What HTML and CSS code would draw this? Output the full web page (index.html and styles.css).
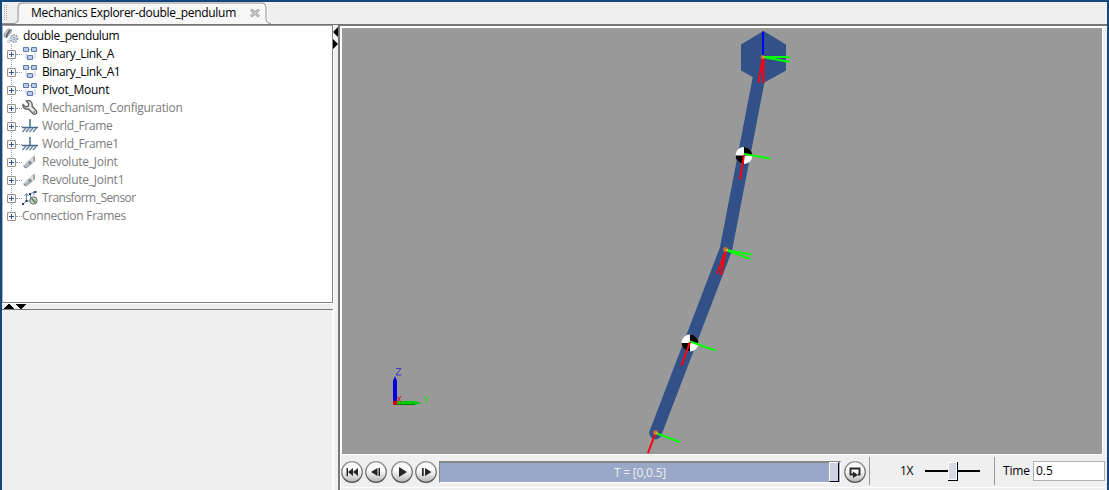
FILE: index.html
```html
<!DOCTYPE html>
<html lang="en">
<head>
<meta charset="utf-8">
<title>Mechanics Explorer</title>
<link rel="stylesheet" href="styles.css">
</head>
<body>
<svg class="defs" width="0" height="0">
  <defs>
    <linearGradient id="ball" x1="0" y1="0" x2="0" y2="1">
      <stop offset="0" stop-color="#f4f4f4"/><stop offset=".4" stop-color="#fff"/><stop offset="1" stop-color="#b5b5b5"/>
    </linearGradient>
    <linearGradient id="rim" x1="0" y1="0" x2="0" y2="1">
      <stop offset="0" stop-color="#999"/><stop offset="1" stop-color="#505050"/>
    </linearGradient>
    <linearGradient id="metal" x1="0" y1="0" x2="1" y2="1">
      <stop offset="0" stop-color="#f4f4f4"/><stop offset=".5" stop-color="#b8bfc5"/><stop offset="1" stop-color="#68727b"/>
    </linearGradient>
    <symbol id="blocks" viewBox="0 0 16 16">
      <path d="M4 7v5h3M13 7v5h-3M6 3.500h4" fill="none" stroke="#b9c5d8"/>
      <path d="M1.500 1.500h5v4h-5zM9.500 1.500h5v4h-5zM5.500 9.500h5v4h-5z" fill="#b9cdf0" stroke="#60779f"/>
    </symbol>
    <symbol id="wrench" viewBox="0 0 16 16">
      <path d="M1 4.500 3.800 7l2.400-.8.500-2.500L4.200 1C7.800-.3 11 2.300 10 6l4.300 4.800c1.400 2.600-1.300 4.500-3.300 2.900L6.500 9C3.300 10 .3 7.600 1 4.500z" fill="#e6e6e6" stroke="#5c5c5c" stroke-width="1.300"/>
      <circle cx="12.200" cy="12" r=".9" fill="#777"/>
    </symbol>
    <symbol id="ground" viewBox="0 0 16 16">
      <path d="M8 1v8M0 9.500h16" fill="none" stroke="#47698b" stroke-width="1.500"/>
      <path d="M4 10 .5 14M7.500 10 4 14M11 10l-3.500 4M14.500 10 11 14" fill="none" stroke="#5f7d9b" stroke-width="1.300"/>
    </symbol>
    <symbol id="joint" viewBox="0 0 16 16">
      <path d="M12.500 1.500 8.500 5 7 9l3 1 2.500-2.500z" fill="#dde1e4" stroke="#b3babf" stroke-width=".7"/>
      <path d="M6.500 6.500 9.500 8 9 10.500l-5 3.700-2.500-2z" fill="url(#metal)" stroke="#a0a8af" stroke-width=".6"/>
      <circle cx="8" cy="8.400" r="1.500" fill="#7c868d"/>
      <path d="m1.700 12 2.300 2M12 3v4.500" stroke="#66717a"/>
    </symbol>
    <symbol id="sensor" viewBox="0 0 16 16">
      <path d="M4.500 4v7M4.500 11h5M4.500 11 1 14M2.500 6l2-2.500 2 2.500M7 4l6-2M8.500 3v6M12 1v4" fill="none" stroke="#6187ae"/>
      <path d="M0 13h2v2H0zM7 3h2v2H7zM12.500 1h2v2h-2zM3.500 10h2v2h-2z" fill="#283d54"/>
      <circle cx="11.500" cy="10.500" r="3.700" fill="#c7d0c7" stroke="#68746c"/>
      <path d="m9.500 8.500 4 4" stroke="#387449" stroke-width="1.200"/>
    </symbol>
    <symbol id="model" viewBox="0 0 16 16">
      <path d="M5 1 8.500 1.500 8 4.500l-4.500 5L1 8.500V6z" fill="url(#metal)" stroke="#79828b" stroke-width=".7"/>
      <path d="M7 2 3.700 7v2.500" fill="none" stroke="#3f4a55" stroke-width="1.300"/>
      <circle cx="11" cy="10.500" r="3.400" fill="#e6ecf0" stroke="#8197aa" stroke-width="1.800" stroke-dasharray="1.500 1"/>
      <circle cx="11" cy="10.500" r="1.200" fill="#fff" stroke="#8295a5"/>
      <circle cx="6" cy="13.500" r="1.500" fill="#e6ecf0" stroke="#91a4b4" stroke-dasharray="1 .7"/>
    </symbol>
  </defs>
</svg>
<div class="window">
  <header class="tabs">
    <svg width="280" height="22">
      <path d="M0 21.500h14q4 0 4-4V5q0-4 4-4h240q4 0 4 4v12.500q0 4 4 4h10V22H0z" fill="#f7f7f7"/>
      <path d="M0 21.500h11q5 0 5-5V5q0-4 4-4h240q4 0 4 4v11.500q0 5 5 5" fill="none" stroke="#929292"/>
      <path d="M0 3h11v18H0z" fill="#efefef"/>
      <path d="M2.500 3v16M4.500 3v16" stroke="#aaa" stroke-dasharray="1 1"/>
      <path d="m249 7.500 8 7M257 7.500l-8 7" stroke="#a4a4a4" stroke-width="2.800"/>
      <path d="m249.500 8 7 6M256.500 8l-7 6" stroke="#e8e8e8" stroke-width=".8"/>
    </svg>
    <span class="title">Mechanics Explorer-double_pendulum</span>
  </header>
  <div class="main">
    <aside class="side">
      <ul class="tree">
        <li class="root tight"><svg width="17" height="16"><use href="#model" width="16" height="16"/></svg><span>double_pendulum</span></li>
        <li class="tight"><i class="plus"></i><svg width="16" height="16"><use href="#blocks"/></svg><span>Binary_Link_A</span></li>
        <li class="tight"><i class="plus"></i><svg width="16" height="16"><use href="#blocks"/></svg><span>Binary_Link_A1</span></li>
        <li><i class="plus"></i><svg width="16" height="16"><use href="#blocks"/></svg><span>Pivot_Mount</span></li>
        <li class="dim"><i class="plus"></i><svg width="16" height="16"><use href="#wrench"/></svg><span>Mechanism_Configuration</span></li>
        <li class="dim tight"><i class="plus"></i><svg width="16" height="16"><use href="#ground"/></svg><span>World_Frame</span></li>
        <li class="dim tight"><i class="plus"></i><svg width="16" height="16"><use href="#ground"/></svg><span>World_Frame1</span></li>
        <li class="dim"><i class="plus"></i><svg width="16" height="16"><use href="#joint"/></svg><span>Revolute_Joint</span></li>
        <li class="dim"><i class="plus"></i><svg width="16" height="16"><use href="#joint"/></svg><span>Revolute_Joint1</span></li>
        <li class="dim tightest"><i class="plus"></i><svg width="16" height="16"><use href="#sensor"/></svg><span>Transform_Sensor</span></li>
        <li class="dim last"><i class="plus"></i><span>Connection Frames</span></li>
      </ul>
      <div class="hsplit"><svg width="26" height="5" shape-rendering="crispEdges"><path d="M3 5 7.500 0h1L13 5zM14 0h11l-5 5h-1z"/></svg></div>
      <div class="blank"></div>
    </aside>
    <div class="vsplit"><svg width="5" height="24"><path d="M5 0v10L0 5zM0 12v10l5-5z"/></svg></div>
    <section class="view">
      <svg class="scene" width="760" height="426" viewBox="342 28 760 426">
        <g fill="#325189" stroke="#325189">
          <path d="M763.500 31 786 44.500v26L763.500 83 741 70.500v-26z" stroke="none"/>
          <path d="M763 57 726 249 655.500 433" fill="none" stroke-width="12.500" stroke-linecap="round" stroke-linejoin="round"/>
        </g>
        <g><circle cx="744" cy="155.500" r="8.500" fill="#fff"/><path d="M744 155.500V147a8.500 8.500 0 0 1 8.500 8.500zM744 155.500v8.500a8.500 8.500 0 0 1-8.500-8.500z"/></g>
        <g><circle cx="690" cy="343" r="8.500" fill="#fff"/><path d="M690 343v-8.500a8.500 8.500 0 0 1 8.500 8.500zM690 343v8.500a8.500 8.500 0 0 1-8.500-8.500z"/></g>
        <g fill="none" stroke-width="2">
          <path d="M763 57V31.500" stroke="#00f"/>
          <path d="M763 57h26.500M763 57l26.500 5M744 154l26 4.500M726 250l25.500 4.500M726 250l24 9M690 341.500l25.500 9M655.500 433l24.500 9" stroke="#0f0"/>
          <path d="M763.500 57v26M763 57l-4.500 25.500M744 155l-4 24.500M726 250l-5 25M726 250l-9 24M690 342l-8.500 23.500M655.500 433l-7.500 20" stroke="#ff0008"/>
        </g>
        <g fill="#c86f30"><circle cx="762.500" cy="57" r="2"/><circle cx="725.500" cy="249.500" r="2.500"/><circle cx="655.500" cy="432.500" r="2.500"/></g>
        <path d="M763 57h2M726 250h2M655.500 433h2" stroke="#c5d62c" stroke-width="1.500"/>
        <path d="M393 403v-22l2-5 2 5v22z" fill="#0000e0"/>
        <path d="M395 401h19l8 2-8 2h-19z" fill="#00cf00"/><path d="M395 404.500h20" stroke="#007800"/>
        <circle cx="395" cy="403" r="2.200" fill="#d00"/>
        <g fill="none"><path d="M396 368.500h5l-5 6.500h5.500" stroke="#3838c0"/><path d="m397 396 4 6.500M401 396l-4 6.500" stroke="#d51d1d"/><path d="m423.500 396 3 4 2.500-4M426.500 400v3.500" stroke="#22d922"/></g>
      </svg>
      <div class="controls">
        <svg class="play" width="98" height="24">
          <g fill="url(#ball)" stroke="url(#rim)" stroke-width="1.200"><circle cx="11" cy="12" r="10.300"/><circle cx="35" cy="12" r="10.300"/><circle cx="61" cy="12" r="10.300"/><circle cx="85" cy="12" r="10.300"/></g>
          <path d="M5.500 8H7v8H5.500zM12 8v8l-5-4zM17 8v8l-5-4zM36.500 8v8L30 12zM37.500 8H39v8h-1.500zM58 7l8 5-8 5zM81 8h1.700v8H81zM84 8v8l6.500-4z" fill="#262626"/>
        </svg>
        <div class="track"><span>T = [0,0.5]</span><i class="knob"></i></div>
        <svg class="loop" width="24" height="24"><circle cx="12" cy="12" r="10.300" fill="url(#ball)" stroke="url(#rim)" stroke-width="1.200"/><path d="M10 14.500H7.500v-6h9v6H15" fill="none" stroke="#262626" stroke-width="1.900"/><path d="m10 11.500 5 3.500-5 3z" fill="#262626"/></svg>
        <div class="speed"><span>1X</span><svg width="58" height="22" shape-rendering="crispEdges"><path d="M1 9h55v2H1z"/><path d="M24 1h10v19H24z"/><path d="M24 1h9v18h-9z" fill="#fff"/><path d="M25 2h7v16h-7z" fill="#d7dae5"/></svg></div>
        <div class="time"><label>Time</label><div class="field">0.5</div></div>
      </div>
    </section>
  </div>
</div>
</body>
</html>
```
FILE: styles.css
```css
* { box-sizing: border-box; }
body { margin: 0; width: 1109px; height: 490px; overflow: hidden; background: #efefef; font: 12px/18px "Open Sans", "Noto Sans", sans-serif; color: #000; }
.defs { position: absolute; }
svg { display: block; flex: none; }
.window { height: 490px; border: solid #15477f; border-width: 2px 2px 0; display: flex; flex-direction: column; }
.tabs { height: 22px; flex: none; position: relative; background: #efefef; }
.title { position: absolute; left: 29px; top: 2px; letter-spacing: -0.3px; white-space: nowrap; }
.main { flex: 1; display: flex; min-height: 0; border-top: 1px solid #737373; }
.side { width: 331px; display: flex; flex-direction: column; flex: none; }
.tree { margin: 0; padding: 1px 0 0; list-style: none; height: 278px; background: #fff; border: solid #848484; border-width: 1px 1px 1px; border-top-color: #999; border-left-color: #b5b5b5; position: relative; }
.tree::before { content: ""; position: absolute; left: 8px; top: 18px; height: 173px; border-left: 1px dotted #999; }
.tree li { height: 18px; display: flex; align-items: center; padding-left: 4px; white-space: nowrap; position: relative; letter-spacing: -0.25px; }
.tree li.tight { letter-spacing: -0.38px; }
.tree li.tightest { letter-spacing: -0.54px; }
.tree li.root { padding-left: 0; }
.tree li > span { padding-left: 4px; }
.tree li.root > span { padding-left: 3px; }
.tree li.last > span { padding-left: 0; }
.tree .dim { color: #7b7b7b; }
.plus { width: 9px; height: 9px; border: 1px solid #929292; border-radius: 1px; background: linear-gradient(#38558c, #38558c) center / 5px 1px no-repeat, linear-gradient(#38558c, #38558c) center / 1px 5px no-repeat, #f6f6f6; margin-right: 6px; position: relative; flex: none; }
.plus::after { content: ""; position: absolute; left: 8px; top: 3px; width: 6px; border-top: 1px dotted #999; }
.hsplit { height: 7px; background: #eee; border-top: 1px solid #fff; border-bottom: 1px solid #777; flex: none; }
.hsplit svg { margin-left: -1px; }
.blank { flex: 1; border-right: 1px solid #fafafa; background: #f0eff0; }
.vsplit { width: 5px; background: #f1f1f1; border-left: 1px solid #fff; padding-top: 2px; flex: none; }
.vsplit svg { margin-left: -1px; }
.view { flex: 1; min-width: 0; border-left: 2px solid #777; padding: 3px 3px 0 2px; background: #efefef; border-top: 1px solid #777; box-shadow: inset 0 1px #fff, inset 1px 0 #fff; }
.scene { background: #999; margin-top: -1px; box-shadow: 0 0 0 1px #fff; }
.controls { display: flex; height: 34px; padding-top: 7px; border-bottom: 1px solid #fff; align-items: flex-start; }
.play { margin: -1px 0 0 -1px; }
.track { width: 402px; flex: none; height: 22px; border: 1px solid #888; border-top-width: 2px; border-bottom-color: #fff; border-right-color: #fff; background: #99a8c8; position: relative; text-align: center; color: #eee; letter-spacing: -.2px; line-height: 19px; }
.knob { position: absolute; right: 1px; top: -1px; width: 10px; height: 20px; background: #ccd2df; border: 1px solid #fff; border-right: 1px solid #000; border-bottom: 1px solid #000; }
.loop { margin: -1px 0 0 2px; }
.speed { display: flex; flex: none; height: 28px; width: 125px; margin: -4px 0 0 2px; padding: 4px 0 0 30px; border-left: 1px solid #999; }
.speed span { width: 24px; line-height: 19px; letter-spacing: -.3px; }
.time { display: flex; flex: none; height: 28px; width: 111px; border-left: 1px solid #999; margin-top: -4px; padding-top: 4px; }
.time label { width: 38px; padding-left: 8px; line-height: 20px; flex: none; letter-spacing: -.2px; }
.field { width: 72px; flex: none; height: 20px; background: #fff; border: 1px solid #adb0b8; padding-left: 2px; line-height: 18px; }
```
